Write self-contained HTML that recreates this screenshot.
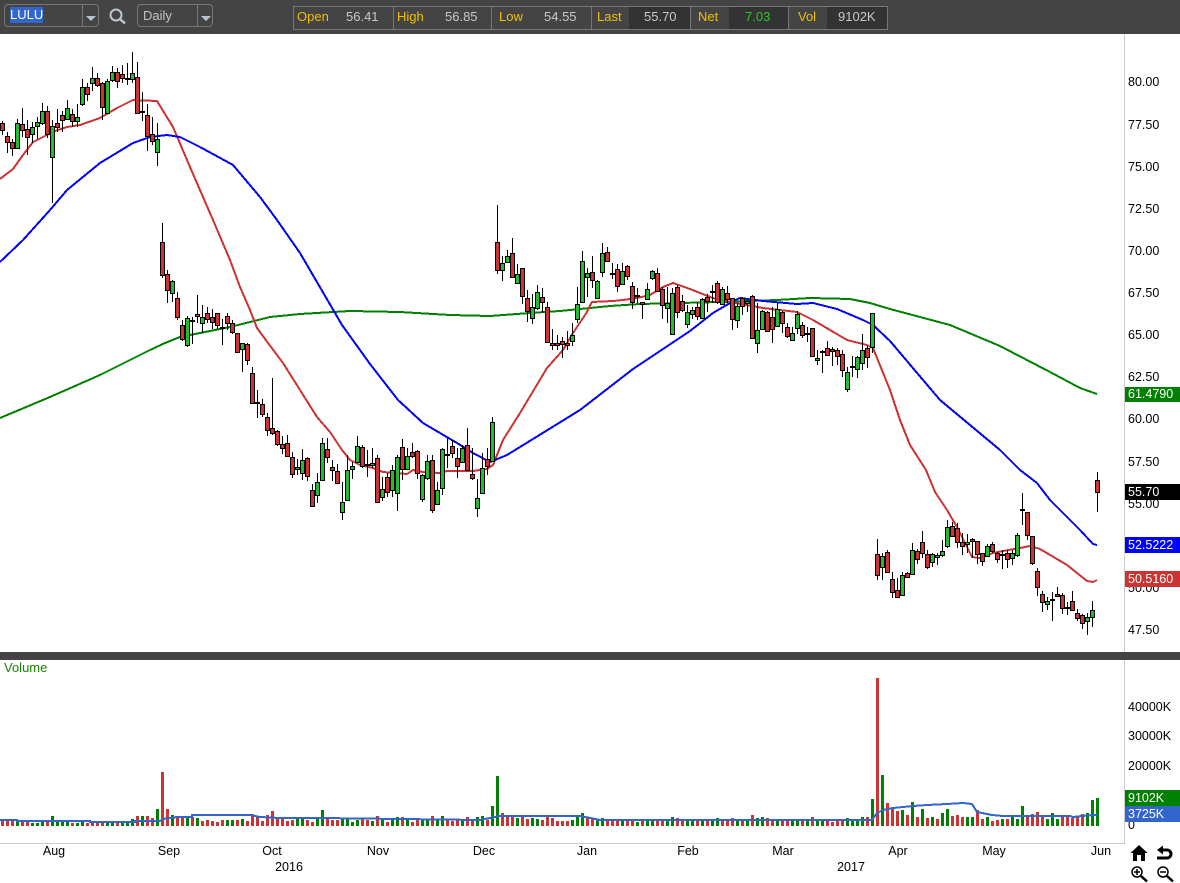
<!DOCTYPE html>
<html><head><meta charset="utf-8"><title>LULU</title>
<style>
html,body{margin:0;padding:0;background:#fff}
#p{position:relative;width:1180px;height:883px;overflow:hidden;background:#fff;font-family:"Liberation Sans",Arial,sans-serif}
#p div{position:absolute;white-space:nowrap}
.t{color:#000;font-size:12.5px;line-height:14px;height:14px}
.a{left:1128px}
.b{width:56px;left:1125px;height:16px;line-height:16px;color:#fff;font-size:12.5px;padding-left:3px;box-sizing:border-box}
.c{text-align:center;width:50px;font-size:12.5px;line-height:14px;color:#000}
.s{font-size:13px;line-height:14px;top:10px}
.y{color:#f0c000}
.v{color:#c8c8c8}
.d{top:7px;height:22px;background:#333}
</style></head><body>
<div id="p">
<div style="left:0;top:0;width:1180px;height:34px;background:#444"></div>
<div style="left:4px;top:4px;width:93px;height:21px;border:1px solid #777;border-radius:4px"></div>
<div style="left:82px;top:5px;width:1px;height:21px;background:#777"></div>
<div style="left:10px;top:7px;width:33px;height:16px;background:#3366cc;color:#fff;font-size:13px;line-height:16px">LULU</div>
<div style="left:137px;top:4px;width:74px;height:21px;border:1px solid #777;border-radius:4px"></div>
<div style="left:197px;top:5px;width:1px;height:21px;background:#777"></div>
<div style="left:143px;top:8px;color:#c4c4c4;font-size:13px;line-height:15px">Daily</div>
<div class="d" style="left:629px;width:61px"></div>
<div class="d" style="left:729px;width:59px"></div>
<div class="d" style="left:827px;width:60px"></div>
<div style="left:293px;top:6px;width:593px;height:22px;border:1px solid #777"></div>
<div style="left:393px;top:6px;width:1px;height:23px;background:#777"></div>
<div style="left:491px;top:6px;width:1px;height:23px;background:#777"></div>
<div style="left:591px;top:6px;width:1px;height:23px;background:#777"></div>
<div style="left:690px;top:6px;width:1px;height:23px;background:#777"></div>
<div style="left:788px;top:6px;width:1px;height:23px;background:#777"></div>
<div class="s y" style="left:297px">Open</div><div class="s v" style="left:346px">56.41</div>
<div class="s y" style="left:397px">High</div><div class="s v" style="left:445px">56.85</div>
<div class="s y" style="left:499px">Low</div><div class="s v" style="left:544px">54.55</div>
<div class="s y" style="left:597px">Last</div><div class="s v" style="left:644px">55.70</div>
<div class="s y" style="left:698px">Net</div><div class="s" style="left:745px;color:#2fc42f">7.03</div>
<div class="s y" style="left:798px">Vol</div><div class="s v" style="left:838px">9102K</div>

<svg width="1180" height="883" viewBox="0 0 1180 883" style="position:absolute;left:0;top:0">
<path d="M86 16h10l-5 5zM201 16h10l-5 5z" fill="#b8c4d0"/>
<circle cx="116" cy="15" r="5.500" fill="none" stroke="#b8c8d0" stroke-width="2"/><path d="M120 19l5 4.500" stroke="#b8c8d0" stroke-width="2.500" fill="none"/>

<rect x="1124" y="34" width="1" height="810" fill="#ccc"/><rect x="0" y="843" width="1124" height="1" fill="#ccc"/>

<g fill="none" shape-rendering="crispEdges">
<path stroke="#008000" stroke-width="2" d="M0 418L50 397 100 375 150 350 165 343 180 337 200 333 230 327 250 322 270 317 300 314 350 311 400 312 450 315 490 316 530 313 560 311 610 306 640 304 680 303 720 302 777 300 810 298 850 299 870 303 890 309 950 325 1000 346 1050 372 1080 388 1097 394"/>
<path stroke="#cc3333" stroke-width="2" d="M0 179L13 169 23 155 33 142 55 131 67 127 80 125 100 118 117 108 133 100 157 101 173 127 190 167 203 197 213 220 230 260 240 287 250 310 257 328 268 343 283 363 300 390 317 417 330 432 342 450 350 460 360 465 373 468 383 472 407 474 413 470 423 472 440 473 447 471 473 471 487 469 493 465 503 440 520 413 547 368 563 350 573 333 587 312 592 302 613 301 623 300 637 298 650 295 663 287 673 283 690 289 700 293 713 298 740 304 763 308 797 312 813 320 830 330 847 340 867 345 873 348 890 390 900 420 910 445 926 470 935 492 947 510 957 527 972 557 980 558 993 553 1003 551 1020 548 1030 546 1040 549 1067 565 1087 581 1093 582 1097 580"/>
<path stroke="#0000ff" stroke-width="2" d="M0 262L23 240 50 210 67 190 100 163 133 143 150 137 167 135 180 137 200 147 233 165 260 197 277 220 300 253 342 325 370 364 398 400 423 423 440 433 457 443 473 453 490 462 507 455 520 447 580 410 633 369 657 353 690 331 713 313 730 303 740 298 763 301 797 304 813 303 837 309 863 320 873 325 890 341 940 400 1000 450 1020 470 1037 483 1050 500 1080 530 1093 544 1097 545"/>
</g>

<path stroke="#000" stroke-width="1" fill="none" d="M2.5 121V135M7.500 132V153M12.500 139V156M17.500 119V148M22.500 108V137M27.500 120V155M32.500 122V143M37.500 117V139M42.500 103V125M47.500 106V138M52.500 120V203M57.500 109V132M62.500 111V132M67.500 100V120M72.500 109V127M77.500 104V127M82.500 79V106M87.500 83V101M92.500 67V91M97.500 73V87M102.500 82V120M107.500 79V113M112.500 66V82M117.500 68V88M122.500 65V83M127.500 63V85M132.500 52V83M137.500 62V113M142.500 92V121M147.500 104V151M152.500 117V145M157.500 123V166M162.500 223V278M167.500 270V303M172.500 280V302M177.500 292V320M182.500 320V341M187.500 316V347M192.500 317V344M197.500 295V323M202.500 305V333M207.500 307V323M212.500 309V329M217.500 313V329M222.500 319V345M227.500 313V330M232.500 320V334M237.500 333V353M242.500 343V372M247.500 343V365M252.500 367V404M257.500 390V418M262.500 399V417M267.500 413V436M272.500 378V435M277.500 430V446M282.500 436V454M287.500 435V457M292.500 452V478M297.500 459V475M302.500 449V480M307.500 457V481M312.500 484V507M317.500 473V503M322.500 438V481M327.500 438V463M332.500 460V481M337.500 464V484M342.500 482V520M347.500 455V500M352.500 462V479M357.500 436V463M362.500 445V468M367.500 450V477M372.500 448V468M377.500 455V503M382.500 477V501M387.500 473V497M392.500 465V497M397.500 455V511M402.500 439V480M407.500 448V470M412.500 443V458M417.500 450V479M422.500 474V502M427.500 455V480M432.500 455V513M437.500 482V505M442.500 448V495M447.500 437V468M452.500 440V458M457.500 448V478M462.500 445V463M467.500 428V471M472.500 448V480M477.500 479V517M482.500 453V493M487.500 448V475M492.500 417V462M497.500 205V274M502.500 256V281M507.500 250V262M512.500 238V278M517.500 264V284M522.500 268V304M527.500 290V322M532.500 294V324M537.500 285V310M542.500 288V313M547.500 302V343M552.500 329V350M557.500 335V350M562.500 337V358M567.500 331V350M572.500 323V346M577.500 287V323M582.500 251V303M587.500 268V297M592.500 256V288M597.500 280V299M602.500 243V277M607.500 247V262M612.500 263V279M617.500 264V292M622.500 263V285M627.500 265V280M632.500 282V309M637.500 288V303M642.500 302V319M647.500 283V300M652.500 270V280M657.500 268V292M662.500 287V319M667.500 287V323M672.500 288V334M677.500 285V318M682.500 295V312M687.500 305V328M692.500 307V319M697.500 302V320M702.500 298V319M707.500 294V312M712.500 285V303M717.500 281V304M722.500 287V305M727.500 286V303M732.500 298V330M737.500 303V328M742.500 297V315M747.500 298V312M752.500 295V339M757.500 303V353M762.500 310V330M767.500 311V332M772.500 307V343M777.500 302V327M782.500 311V333M787.500 323V338M792.500 327V341M797.500 311V334M802.500 322V338M807.500 327V342M812.500 328V357M817.500 350V365M822.500 350V373M827.500 341V356M832.500 347V366M837.500 348V365M842.500 350V377M847.500 367V392M852.500 356V377M857.500 356V378M862.500 334V370M867.500 346V368M872.500 313V353M877.500 539V580M882.500 553V580M887.500 550V573M892.500 572V598M897.500 578V598M902.500 572V596M907.500 572V578M912.500 543V575M917.500 549V564M922.500 531V558M927.500 550V569M932.500 553V567M937.500 553V565M942.500 540V557M947.500 520V548M952.500 522V537M957.500 523V548M962.500 533V555M967.500 534V553M972.500 538V558M977.500 541V564M982.500 553V566M987.500 544V557M992.500 542V553M997.500 552V563M1002.500 550V569M1007.500 550V568M1012.500 550V565M1017.500 533V557M1022.500 493V525M1027.500 512V540M1032.500 536V565M1037.500 568V596M1042.500 591V612M1047.500 597V610M1052.500 592V621M1057.500 587V597M1062.500 593V614M1067.500 602V615M1072.500 591V611M1077.500 609V621M1082.500 614V629M1087.500 613V635M1092.500 601V627M1097.500 472V512"/>
<path stroke="#000" stroke-width="2" fill="none" d="M125 79h5M140 112h5M190 321h5M220 328h5M255 403h5M365 465h5M445 455h5M610 274h5M635 296h5M710 292h5M805 334h5M820 352h5M850 367h5M1000 555h5M1020 510h5M1050 600h5M1065 608h5"/>
<path stroke="#000" fill="#cc3333" d="M.5 123.500h4v7h-4zM5.500 136.500h4v6h-4zM10.500 142.500h4v6h-4zM20.500 124.500h4v6h-4zM25.500 129.500h4v8h-4zM45.500 111.500h4v23h-4zM55.500 123.500h4v4h-4zM60.500 115.500h4v5h-4zM70.500 114.500h4v7h-4zM85.500 87.500h4v7h-4zM95.500 78.500h4v7h-4zM100.500 83.500h4v24h-4zM115.500 72.500h4v9h-4zM120.500 74.500h4v4h-4zM135.500 77.500h4v36h-4zM145.500 115.500h4v21h-4zM150.500 134.500h4v7h-4zM160.500 242.500h4v33h-4zM165.500 274.500h4v16h-4zM175.500 298.500h4v19h-4zM180.500 325.500h4v14h-4zM195.500 314.500h4v2h-4zM205.500 313.500h4v6h-4zM210.500 317.500h4v5h-4zM215.500 313.500h4v12h-4zM225.500 316.500h4v7h-4zM230.500 323.500h4v9h-4zM235.500 333.500h4v19h-4zM245.500 344.500h4v16h-4zM250.500 373.500h4v30h-4zM260.500 404.500h4v10h-4zM265.500 417.500h4v13h-4zM270.500 428.500h4v5h-4zM275.500 431.500h4v13h-4zM280.500 444.500h4v4h-4zM285.500 443.500h4v13h-4zM290.500 457.500h4v17h-4zM305.500 458.500h4v18h-4zM310.500 490.500h4v16h-4zM325.500 449.500h4v8h-4zM330.500 467.500h4v3h-4zM335.500 471.500h4v12h-4zM360.500 447.500h4v19h-4zM375.500 458.500h4v44h-4zM385.500 477.500h4v15h-4zM400.500 447.500h4v22h-4zM410.500 452.500h4v4h-4zM415.500 451.500h4v22h-4zM430.500 460.500h4v50h-4zM450.500 446.500h4v7h-4zM455.500 458.500h4v8h-4zM465.500 445.500h4v25h-4zM470.500 474.500h4v4h-4zM485.500 459.500h4v7h-4zM495.500 242.500h4v28h-4zM510.500 253.500h4v24h-4zM520.500 268.500h4v28h-4zM525.500 298.500h4v13h-4zM540.500 297.500h4v5h-4zM545.500 307.500h4v35h-4zM550.500 343.500h4v2h-4zM555.500 343.500h4v2h-4zM560.500 341.500h4v3h-4zM565.500 343.500h4v2h-4zM590.500 272.500h4v8h-4zM605.500 252.500h4v9h-4zM615.500 269.500h4v17h-4zM625.500 266.500h4v10h-4zM630.500 286.500h4v16h-4zM640.500 302.500h4v2h-4zM655.500 273.500h4v18h-4zM660.500 289.500h4v16h-4zM675.500 287.500h4v25h-4zM680.500 301.500h4v9h-4zM695.500 307.500h4v9h-4zM705.500 297.500h4v4h-4zM715.500 283.500h4v19h-4zM725.500 293.500h4v6h-4zM730.500 298.500h4v21h-4zM740.500 298.500h4v8h-4zM750.500 296.500h4v42h-4zM765.500 312.500h4v19h-4zM770.500 317.500h4v12h-4zM780.500 312.500h4v11h-4zM785.500 327.500h4v9h-4zM800.500 325.500h4v10h-4zM810.500 328.500h4v28h-4zM825.500 348.500h4v7h-4zM830.500 349.500h4v2h-4zM835.500 350.500h4v6h-4zM840.500 354.500h4v16h-4zM865.500 348.500h4v9h-4zM875.500 554.500h4v21h-4zM885.500 552.500h4v20h-4zM890.500 579.500h4v13h-4zM895.500 590.500h4v7h-4zM905.500 573.500h4v4h-4zM915.500 551.500h4v8h-4zM920.500 542.500h4v11h-4zM925.500 554.500h4v13h-4zM950.500 526.500h4v10h-4zM955.500 528.500h4v14h-4zM960.500 542.500h4v4h-4zM970.500 539.500h4v2h-4zM975.500 541.500h4v13h-4zM980.500 553.500h4v8h-4zM990.500 544.500h4v7h-4zM995.500 553.500h4v6h-4zM1005.500 553.500h4v6h-4zM1025.500 512.500h4v23h-4zM1030.500 536.500h4v27h-4zM1035.500 571.500h4v16h-4zM1040.500 594.500h4v8h-4zM1055.500 594.500h4v2h-4zM1060.500 595.500h4v13h-4zM1070.500 601.500h4v9h-4zM1075.500 613.500h4v5h-4zM1080.500 615.500h4v8h-4zM1095.500 480.500h4v12h-4z"/>
<path stroke="#000" fill="#22bb33" d="M15.500 123.500h4v25h-4zM30.500 127.500h4v7h-4zM35.500 122.500h4v4h-4zM40.500 111.500h4v12h-4zM50.500 126.500h4v31h-4zM65.500 108.500h4v11h-4zM75.500 117.500h4v4h-4zM80.500 87.500h4v17h-4zM90.500 78.500h4v5h-4zM105.500 81.500h4v32h-4zM110.500 72.500h4v8h-4zM130.500 73.500h4v6h-4zM155.500 139.500h4v13h-4zM170.500 281.500h4v12h-4zM185.500 318.500h4v27h-4zM200.500 317.500h4v6h-4zM240.500 343.500h4v6h-4zM295.500 467.500h4v2h-4zM300.500 460.500h4v13h-4zM315.500 482.500h4v13h-4zM320.500 443.500h4v37h-4zM340.500 502.500h4v10h-4zM345.500 470.500h4v30h-4zM350.500 466.500h4v3h-4zM355.500 446.500h4v16h-4zM370.500 463.500h4v2h-4zM380.500 489.500h4v8h-4zM390.500 470.500h4v20h-4zM395.500 457.500h4v36h-4zM405.500 456.500h4v13h-4zM420.500 475.500h4v24h-4zM425.500 461.500h4v17h-4zM435.500 490.500h4v14h-4zM440.500 449.500h4v39h-4zM460.500 448.500h4v14h-4zM475.500 498.500h4v10h-4zM480.500 468.500h4v25h-4zM490.500 422.500h4v39h-4zM500.500 263.500h4v7h-4zM505.500 256.500h4v6h-4zM515.500 274.500h4v9h-4zM530.500 307.500h4v11h-4zM535.500 292.500h4v16h-4zM570.500 335.500h4v6h-4zM575.500 304.500h4v15h-4zM580.500 261.500h4v41h-4zM585.500 273.500h4v4h-4zM595.500 281.500h4v17h-4zM600.500 253.500h4v19h-4zM620.500 271.500h4v13h-4zM645.500 289.500h4v10h-4zM650.500 271.500h4v7h-4zM665.500 303.500h4v5h-4zM670.500 293.500h4v41h-4zM685.500 312.500h4v12h-4zM690.500 310.500h4v4h-4zM700.500 299.500h4v19h-4zM720.500 289.500h4v15h-4zM735.500 306.500h4v14h-4zM745.500 301.500h4v2h-4zM755.500 330.500h4v13h-4zM760.500 311.500h4v18h-4zM775.500 309.500h4v17h-4zM790.500 333.500h4v7h-4zM795.500 314.500h4v14h-4zM815.500 358.500h4v2h-4zM845.500 372.500h4v17h-4zM855.500 357.500h4v12h-4zM860.500 350.500h4v13h-4zM870.500 313.500h4v34h-4zM880.500 556.500h4v11h-4zM900.500 575.500h4v20h-4zM910.500 550.500h4v24h-4zM930.500 554.500h4v8h-4zM935.500 555.500h4v2h-4zM940.500 551.500h4v4h-4zM945.500 527.500h4v19h-4zM965.500 542.500h4v2h-4zM985.500 546.500h4v10h-4zM1010.500 553.500h4v5h-4zM1015.500 535.500h4v20h-4zM1045.500 601.500h4v3h-4zM1085.500 617.500h4v4h-4zM1090.500 610.500h4v7h-4z"/>

<path stroke="#cc3333" stroke-width="3" fill="none" d="M2.500 826V821M7.500 826V821M12.500 826V821M22.500 826V822M27.500 826V822M47.500 826V822M72.500 826V823M87.500 826V823M92.500 826V822M97.500 826V823M102.500 826V823M117.500 826V823M137.500 826V816M147.500 826V816M152.500 826V818M162.500 826V772M167.500 826V809M177.500 826V817M182.500 826V816M192.500 826V817M202.500 826V821M207.500 826V820M212.500 826V821M217.500 826V822M222.500 826V820M237.500 826V820M247.500 826V821M252.500 826V814M257.500 826V816M262.500 826V821M267.500 826V815M272.500 826V811M277.500 826V817M282.500 826V817M287.500 826V821M292.500 826V820M307.500 826V820M312.500 826V822M327.500 826V818M332.500 826V820M337.500 826V820M362.500 826V819M367.500 826V820M377.500 826V816M387.500 826V822M402.500 826V817M412.500 826V822M417.500 826V819M432.500 826V816M447.500 826V820M452.500 826V821M457.500 826V820M467.500 826V817M472.500 826V819M487.500 826V820M502.500 826V813M507.500 826V817M512.500 826V817M522.500 826V816M527.500 826V819M542.500 826V820M547.500 826V815M552.500 826V818M557.500 826V821M562.500 826V821M567.500 826V821M587.500 826V817M592.500 826V819M607.500 826V820M612.500 826V821M617.500 826V820M627.500 826V821M632.500 826V819M642.500 826V821M657.500 826V821M662.500 826V819M677.500 826V818M682.500 826V820M697.500 826V820M707.500 826V821M722.500 826V820M727.500 826V820M732.500 826V818M742.500 826V820M752.500 826V815M767.500 826V818M772.500 826V820M782.500 826V821M787.500 826V820M802.500 826V820M812.500 826V817M827.500 826V821M832.500 826V822M837.500 826V820M842.500 826V820M867.500 826V817M877.500 826V678M887.500 826V803M892.500 826V809M897.500 826V811M907.500 826V815M917.500 826V817M927.500 826V818M937.500 826V819M952.500 826V816M957.500 826V815M962.500 826V817M977.500 826V810M982.500 826V819M992.500 826V821M997.500 826V820M1007.500 826V819M1027.500 826V816M1032.500 826V814M1037.500 826V812M1042.500 826V816M1062.500 826V816M1067.500 826V816M1072.500 826V818M1077.500 826V817M1082.500 826V814"/>
<path stroke="#008000" stroke-width="3" fill="none" d="M17.500 826V821M32.500 826V823M37.500 826V823M42.500 826V822M52.500 826V816M57.500 826V822M62.500 826V822M67.500 826V822M77.500 826V823M82.500 826V822M107.500 826V823M112.500 826V823M122.500 826V823M127.500 826V823M132.500 826V819M142.500 826V816M157.500 826V809M172.500 826V815M187.500 826V817M197.500 826V818M227.500 826V820M232.500 826V820M242.500 826V819M297.500 826V819M302.500 826V819M317.500 826V818M322.500 826V810M342.500 826V818M347.500 826V819M352.500 826V822M357.500 826V820M372.500 826V821M382.500 826V820M392.500 826V819M397.500 826V817M407.500 826V820M422.500 826V819M427.500 826V819M437.500 826V819M442.500 826V816M462.500 826V820M477.500 826V817M482.500 826V816M492.500 826V806M497.500 826V776M517.500 826V818M532.500 826V818M537.500 826V819M572.500 826V820M577.500 826V817M582.500 826V813M597.500 826V819M602.500 826V818M622.500 826V820M637.500 826V822M647.500 826V821M652.500 826V820M667.500 826V820M672.500 826V817M687.500 826V819M692.500 826V820M702.500 826V819M712.500 826V820M717.500 826V818M737.500 826V820M747.500 826V821M757.500 826V818M762.500 826V817M777.500 826V820M792.500 826V821M797.500 826V820M807.500 826V821M817.500 826V821M822.500 826V821M847.500 826V818M852.500 826V820M857.500 826V820M862.500 826V817M872.500 826V799M882.500 826V775M902.500 826V810M912.500 826V802M922.500 826V809M932.500 826V817M942.500 826V813M947.500 826V809M967.500 826V817M972.500 826V817M987.500 826V817M1002.500 826V819M1012.500 826V816M1017.500 826V819M1022.500 826V806M1047.500 826V819M1052.500 826V813M1057.500 826V819M1087.500 826V813M1092.500 826V800M1097.500 826V798"/>
<path stroke="#3366cc" stroke-width="2" fill="none" shape-rendering="crispEdges" d="M0 820H17V821H90V822H135V821H160L163 819 170 818 177 817H192V815H250L260 817 280 818 320 818 480 820 490 818 500 816H580L600 820H872L877 813 883 810 893 808 903 807 913 806 927 805 947 804 963 803 972 804 977 812 987 814 992 815 1003 816H1070L1073 817 1082 816 1093 815H1097"/>

<path d="M1130.500 853L1139 845 1147.500 853H1145V861H1141V855H1137V861H1133V853z" fill="#000"/>
<path d="M1162 850H1167A4 4 0 0 1 1167 858H1157" fill="none" stroke="#000" stroke-width="3"/><path d="M1157 850L1163 845.500V854.500z" fill="#000"/>
<circle cx="1137" cy="872" r="5" fill="none" stroke="#000" stroke-width="1.500"/><path d="M1141 876l6 5.500" stroke="#000" stroke-width="2.500"/><path d="M1134 872h6M1137 869v6" stroke="#000" stroke-width="1.500"/>
<circle cx="1163" cy="872" r="5" fill="none" stroke="#000" stroke-width="1.500"/><path d="M1167 876l6 5.500" stroke="#000" stroke-width="2.500"/><path d="M1160 872h6" stroke="#000" stroke-width="1.500"/>
</svg>

<div style="left:0;top:652px;width:1180px;height:8px;background:#444"></div>
<div style="left:4px;top:661px;font-size:13px;line-height:14px;color:#1a8000">Volume</div>

<div class="t a" style="top:75px">80.00</div>
<div class="t a" style="top:118px">77.50</div>
<div class="t a" style="top:160px">75.00</div>
<div class="t a" style="top:202px">72.50</div>
<div class="t a" style="top:244px">70.00</div>
<div class="t a" style="top:286px">67.50</div>
<div class="t a" style="top:328px">65.00</div>
<div class="t a" style="top:370px">62.50</div>
<div class="t a" style="top:412px">60.00</div>
<div class="t a" style="top:455px">57.50</div>
<div class="t a" style="top:497px">55.00</div>
<div class="t a" style="top:581px">50.00</div>
<div class="t a" style="top:623px">47.50</div>
<div class="b" style="top:387px;height:15px;line-height:15px;background:#008000">61.4790</div>
<div class="b" style="top:484px;background:#000">55.70</div>
<div class="b" style="top:537px;background:#0000ff">52.5222</div>
<div class="b" style="top:571px;background:#cc3333">50.5160</div>

<div class="t a" style="top:700px">40000K</div>
<div class="t a" style="top:729px">30000K</div>
<div class="t a" style="top:759px">20000K</div>
<div class="t a" style="top:818px">0</div>
<div class="b" style="top:790px;background:#008000">9102K</div>
<div class="b" style="top:806px;background:#3366cc">3725K</div>

<div class="c" style="left:29px;top:844px">Aug</div>
<div class="c" style="left:144px;top:844px">Sep</div>
<div class="c" style="left:247px;top:844px">Oct</div>
<div class="c" style="left:353px;top:844px">Nov</div>
<div class="c" style="left:459px;top:844px">Dec</div>
<div class="c" style="left:562px;top:844px">Jan</div>
<div class="c" style="left:663px;top:844px">Feb</div>
<div class="c" style="left:758px;top:844px">Mar</div>
<div class="c" style="left:873px;top:844px">Apr</div>
<div class="c" style="left:969px;top:844px">May</div>
<div class="c" style="left:1076px;top:844px">Jun</div>
<div class="c" style="left:264px;top:860px">2016</div>
<div class="c" style="left:826px;top:860px">2017</div>
</div>
</body></html>
